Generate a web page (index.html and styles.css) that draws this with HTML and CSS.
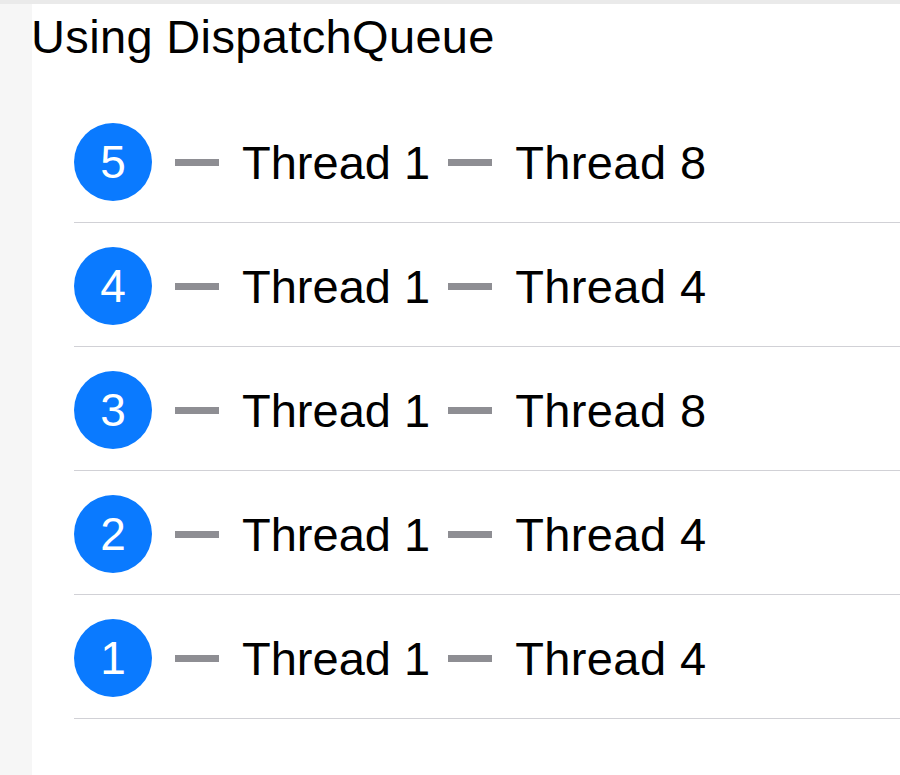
FILE: index.html
```html
<!DOCTYPE html>
<html>
<head>
<meta charset="utf-8">
<link rel="stylesheet" href="styles.css">
</head>
<body>
<div class="topbar"></div>
<div class="page">
  <div class="side"></div>
  <div class="main">
    <div class="title">Using DispatchQueue</div>
    <div class="list">
      <div class="row"><span class="badge">5</span><span class="dash d1"></span><span class="label l1">Thread 1</span><span class="dash d2"></span><span class="label l2">Thread 8</span></div>
      <div class="row"><span class="badge">4</span><span class="dash d1"></span><span class="label l1">Thread 1</span><span class="dash d2"></span><span class="label l2">Thread 4</span></div>
      <div class="row"><span class="badge">3</span><span class="dash d1"></span><span class="label l1">Thread 1</span><span class="dash d2"></span><span class="label l2">Thread 8</span></div>
      <div class="row"><span class="badge">2</span><span class="dash d1"></span><span class="label l1">Thread 1</span><span class="dash d2"></span><span class="label l2">Thread 4</span></div>
      <div class="row"><span class="badge">1</span><span class="dash d1"></span><span class="label l1">Thread 1</span><span class="dash d2"></span><span class="label l2">Thread 4</span></div>
    </div>
  </div>
</div>
</body>
</html>
```

FILE: styles.css
```css
html, body {
  margin: 0;
  padding: 0;
  background: #ffffff;
  font-family: "Liberation Sans", Arial, sans-serif;
  color: #000000;
  overflow: hidden;
}
.topbar {
  height: 4px;
  background: #eaeaea;
}
.page {
  display: flex;
  min-height: 771px;
}
.side {
  width: 32px;
  flex: none;
  background: #f6f6f6;
}
.main {
  flex: 1;
  min-width: 0;
}
.title {
  font-size: 47px;
  line-height: 56px;
  margin-top: 5px;
  margin-left: -1px;
  letter-spacing: 0.35px;
}
.list {
  margin-top: 34px;
  margin-left: 42px;
}
.row {
  display: flex;
  align-items: center;
  padding: 24px 0 21px;
  border-bottom: 1px solid #d1d1d6;
}
.badge {
  flex: none;
  width: 78px;
  height: 78px;
  border-radius: 50%;
  background: #0a7aff;
  color: #ffffff;
  font-size: 46px;
  line-height: 78px;
  text-align: center;
}
.dash {
  flex: none;
  width: 44px;
  height: 7px;
  background: #8e8e93;
}
.d1 { margin-left: 23px; }
.d2 { margin-left: 18px; }
.label {
  font-size: 47px;
  line-height: 56px;
  padding-top: 2px;
}
.l1 { margin-left: 23px; }
.l2 { margin-left: 23px; letter-spacing: 0.4px; }
```
